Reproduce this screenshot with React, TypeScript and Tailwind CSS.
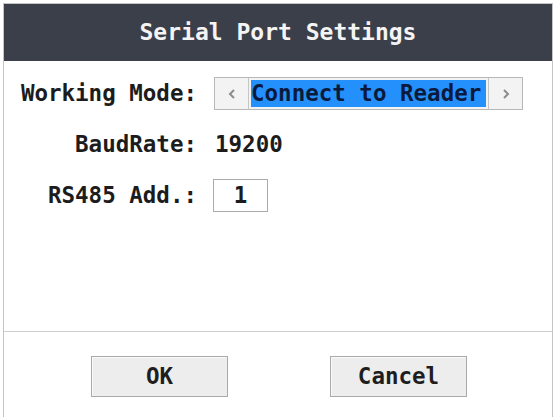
import { useState } from "react";

const mono = "font-['DejaVu_Sans_Mono',monospace]";

const Chevron = ({ dir }: { dir: "left" | "right" }) => (
  <svg width="8" height="12" viewBox="0 0 8 12" fill="none">
    <polyline
      points={dir === "left" ? "6,2 2,6 6,10" : "2,2 6,6 2,10"}
      stroke="#8c8c8c"
      strokeWidth="2"
    />
  </svg>
);

const Label = ({ children }: { children: string }) => (
  <div className="w-[193px] shrink-0 text-right whitespace-pre">{children}</div>
);

const DialogButton = ({ children }: { children: string }) => (
  <button className="w-[137px] h-[41px] bg-[#ededed] border border-[#a9a9a9] shadow-[inset_1px_1px_0_#fafafa] text-[#1e1e1e] font-bold text-[22.5px] leading-none">
    {children}
  </button>
);

export default function App() {
  const modes = ["Connect to Reader", "Connect to Client"];
  const [mode, setMode] = useState(0);

  return (
    <div className={`w-[556px] h-[417px] bg-white pt-[3px] px-[3px] ${mono}`}>
      <div className="h-[414px] flex flex-col border border-[#c4c4c4] border-b-0">
        {/* title bar */}
        <div className="h-[57px] shrink-0 bg-[#3b3f4a] flex items-center justify-center">
          <h1 className="text-[#f4f4f4] text-[23px] font-bold leading-none">Serial Port Settings</h1>
        </div>

        {/* form rows */}
        <div className="flex-1 flex flex-col gap-[18px] pt-[16px] text-[22.5px] font-bold text-[#1c1c1c] leading-none">
          <div className="h-[33px] flex items-center">
            <Label>Working Mode:</Label>
            <div className="ml-[17px] w-[309px] h-[33px] flex items-stretch border border-[#b8b8b8] bg-[#f3f3f3]">
              <button
                onClick={() => setMode((mode + modes.length - 1) % modes.length)}
                className="w-[34px] flex items-center justify-center border-r border-[#c6c6c6]"
              >
                <Chevron dir="left" />
              </button>
              <div className="flex-1 flex items-center p-[2px]">
                <div className="h-full w-full bg-[#2390fb] text-[#0b1a3c] flex items-center whitespace-pre">
                  {modes[mode]}
                </div>
              </div>
              <button
                onClick={() => setMode((mode + 1) % modes.length)}
                className="w-[34px] flex items-center justify-center border-l border-[#c6c6c6]"
              >
                <Chevron dir="right" />
              </button>
            </div>
          </div>

          <div className="h-[33px] flex items-center">
            <Label>BaudRate:</Label>
            <span className="ml-[18px]">19200</span>
          </div>

          <div className="h-[33px] flex items-center">
            <Label>RS485 Add.:</Label>
            <div className="ml-[16px] w-[55px] h-[33px] border border-[#ababab] flex items-center justify-center">
              1
            </div>
          </div>
        </div>

        {/* footer */}
        <div className="h-[86px] shrink-0 border-t border-[#cfcfcf] flex items-start justify-between pt-[24px] pl-[87px] pr-[85px]">
          <DialogButton>OK</DialogButton>
          <DialogButton>Cancel</DialogButton>
        </div>
      </div>
    </div>
  );
}
